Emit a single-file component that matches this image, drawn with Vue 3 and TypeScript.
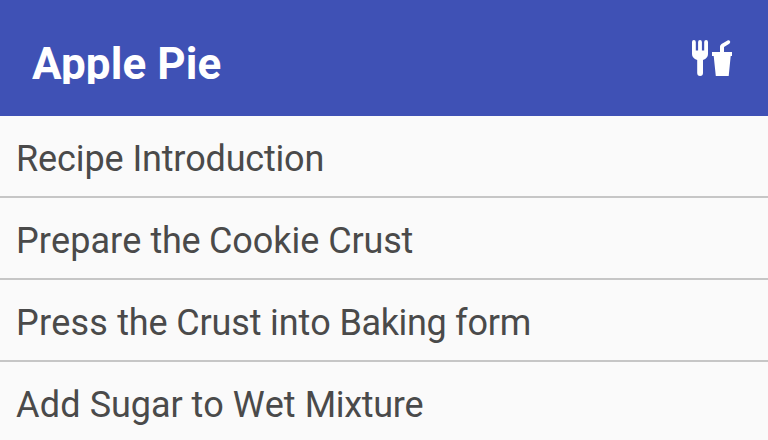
<script setup lang="ts">
interface Word {
  text: string
  tracking: number
}

const title: string = 'Apple Pie'
const steps: Word[][] = [
  [
    { text: 'Recipe ', tracking: -0.1 },
    { text: 'Introduction', tracking: -0.2 },
  ],
  [
    { text: 'Prepare ', tracking: 0.06 },
    { text: 'the ', tracking: -0.3 },
    { text: 'Cookie ', tracking: -0.03 },
    { text: 'Crust', tracking: -0.2 },
  ],
  [
    { text: 'Press ', tracking: 0.17 },
    { text: 'the ', tracking: -0.12 },
    { text: 'Crust ', tracking: -0.17 },
    { text: 'into ', tracking: -0.1 },
    { text: 'Baking ', tracking: -0.35 },
    { text: 'form', tracking: -0.13 },
  ],
  [
    { text: 'Add ', tracking: 0.2 },
    { text: 'Sugar ', tracking: -0.1 },
    { text: 'to ', tracking: 0 },
    { text: 'Wet ', tracking: 0.1 },
    { text: 'Mixture', tracking: -0.35 },
  ],
]
</script>

<template>
  <main class="screen">
    <header class="bar">
      <h1 class="title">{{ title }}</h1>
      <svg class="icon" viewBox="0 0 40 36" aria-hidden="true">
        <path d="M0 1.900a1.900 1.900 0 0 1 3.800 0V10.500h2.300V1.900a1.900 1.900 0 0 1 3.800 0V10.500h2.300V1.900a1.900 1.900 0 0 1 3.800 0V14Q16 18 11 20V33.100a2.900 2.900 0 0 1-5.800 0V20Q0 18 0 14z" />
        <path d="M20 12h8V6.500Q28 5 29.500 4L36 .3Q37.300-.2 38 1.200T37.300 3.700L32 7V12h8v4h-1.300L36.700 36H23.800L21.700 16H20z" />
      </svg>
    </header>
    <ul class="steps">
      <li v-for="(words, row) in steps" :key="row" class="step">
        <span v-for="(word, i) in words" :key="i" :style="{ letterSpacing: word.tracking + 'px' }">{{ word.text }}</span>
      </li>
    </ul>
  </main>
</template>

<style>
body {
  background: #fafafa;
  overflow: hidden;
}
</style>

<style scoped>
.screen {
  height: 440px;
  overflow: hidden;
  font-family: Roboto, sans-serif;
  background: #fafafa;
}
.bar {
  display: flex;
  align-items: flex-start;
  justify-content: space-between;
  box-sizing: border-box;
  height: 116px;
  padding: 38px 36px 0 32px;
  background: #3f51b5;
}
.title {
  height: 46px;
  margin: 0;
  overflow: hidden;
  color: #fff;
  font-size: 44px;
  font-weight: 700;
  line-height: 52px;
  letter-spacing: 0.1px;
}
.icon {
  width: 40px;
  height: 36px;
  margin-top: 2px;
  fill: #fff;
}
.steps {
  margin: 0;
  padding: 0;
  list-style: none;
}
.step {
  box-sizing: border-box;
  height: 82px;
  padding: 0 16px;
  border-bottom: 2px solid #c6c6c6;
  color: #4a4a4a;
  font-size: 36px;
  font-kerning: none;
  line-height: 86px;
  white-space: pre;
}
</style>
